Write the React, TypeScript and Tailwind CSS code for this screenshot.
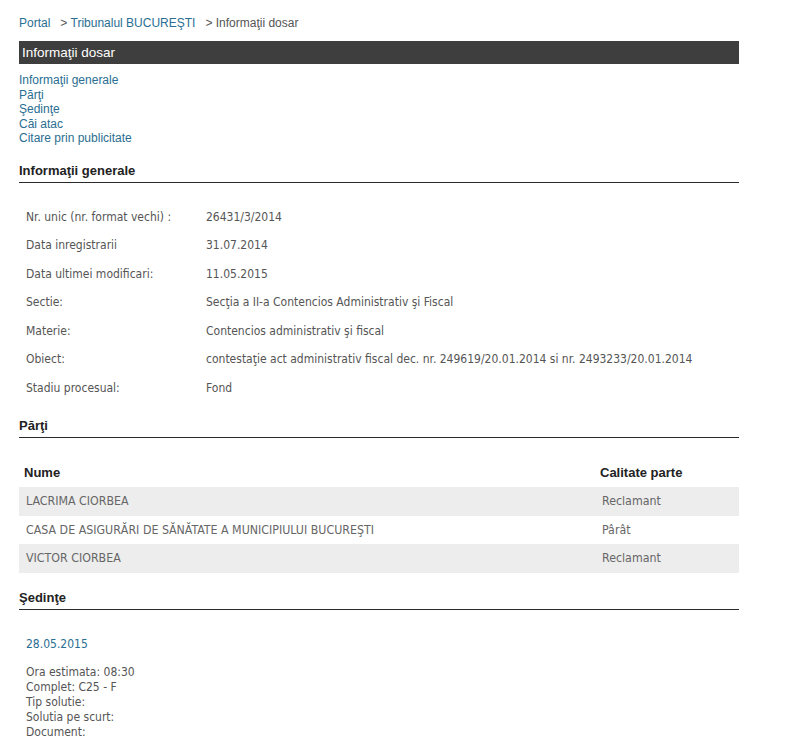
const info: [string, string][] = [
  ["Nr. unic (nr. format vechi) :", "26431/3/2014"],
  ["Data inregistrarii", "31.07.2014"],
  ["Data ultimei modificari:", "11.05.2015"],
  ["Sectie:", "Secţia a II-a Contencios Administrativ şi Fiscal"],
  ["Materie:", "Contencios administrativ şi fiscal"],
  [
    "Obiect:",
    "contestaţie act administrativ fiscal dec. nr. 249619/20.01.2014 si nr. 2493233/20.01.2014",
  ],
  ["Stadiu procesual:", "Fond"],
];

const parti: [string, string][] = [
  ["LACRIMA CIORBEA", "Reclamant"],
  ["CASA DE ASIGURĂRI DE SĂNĂTATE A MUNICIPIULUI BUCUREŞTI", "Pârât"],
  ["VICTOR CIORBEA", "Reclamant"],
];

const arial = "font-['Liberation_Sans',Arial,sans-serif]";
const tahoma = "font-['DejaVu_Sans_Condensed','DejaVu_Sans',sans-serif]";

const SectionTitle = ({ children, mt }: { children: string; mt: string }) => (
  <h2
    className={`${mt} ${arial} text-[13px] font-bold leading-4 text-[#222] pb-[3px] border-b border-[#2a2a2a]`}
  >
    {children}
  </h2>
);

const App = () => {
  return (
    <div className="w-[800px] min-h-[751px] bg-white">
      <div className="w-[720px] ml-[19px] pt-4">
        <div className={`${arial} text-[12px] leading-[15px] text-[#555]`}>
          <a className="text-[#2a6e91]">Portal</a>
          <span>&nbsp;&nbsp; &gt; </span>
          <a className="text-[#2a6e91]">Tribunalul BUCUREŞTI</a>
          <span>&nbsp;&nbsp; &gt; Informaţii dosar</span>
        </div>

        <div
          className={`mt-[10px] h-[23px] bg-[#3e3e3e] pl-[3px] ${arial} text-[13.5px] leading-[23px] text-white`}
        >
          Informaţii dosar
        </div>

        <nav className={`mt-[9px] flex flex-col ${arial} text-[12px] leading-[14.5px] text-[#2a6e91]`}>
          <a>Informaţii generale</a>
          <a>Părţi</a>
          <a>Şedinţe</a>
          <a>Căi atac</a>
          <a>Citare prin publicitate</a>
        </nav>

        <SectionTitle mt="mt-[17px]">Informaţii generale</SectionTitle>
        <div className={`mt-[20px] ${tahoma} text-[12px] text-[#555]`}>
          {info.map(([label, value]) => (
            <div key={label} className="grid grid-cols-[180px_1fr] h-[28.5px] items-center pl-[7px]">
              <span>{label}</span>
              <span>{value}</span>
            </div>
          ))}
        </div>

        <SectionTitle mt="mt-4">Părţi</SectionTitle>
        <div className="mt-5">
          <div
            className={`grid grid-cols-[581px_1fr] h-[29px] items-center ${arial} text-[13px] font-bold text-[#222]`}
          >
            <span className="pl-[5px]">Nume</span>
            <span>Calitate parte</span>
          </div>
          {parti.map(([name, role], i) => (
            <div
              key={name}
              className={`grid grid-cols-[581px_1fr] h-[28.5px] items-center ${tahoma} text-[12.3px] text-[#666] ${
                i % 2 === 0 ? "bg-[#ededed]" : "bg-white"
              }`}
            >
              <span className="pl-[7px]">{name}</span>
              <span className="pl-[2px]">{role}</span>
            </div>
          ))}
        </div>

        <SectionTitle mt="mt-[17px]">Şedinţe</SectionTitle>
        <div className={`pl-[7px] ${tahoma} text-[12px] leading-[15px]`}>
          <div className="mt-[27px] text-[#2a6e91]">28.05.2015</div>
          <div className="mt-[13px] flex flex-col text-[#555]">
            <span>Ora estimata: 08:30</span>
            <span>Complet: C25 - F</span>
            <span>Tip solutie:</span>
            <span>Solutia pe scurt:</span>
            <span>Document:</span>
          </div>
        </div>
      </div>
    </div>
  );
};

export default App;
